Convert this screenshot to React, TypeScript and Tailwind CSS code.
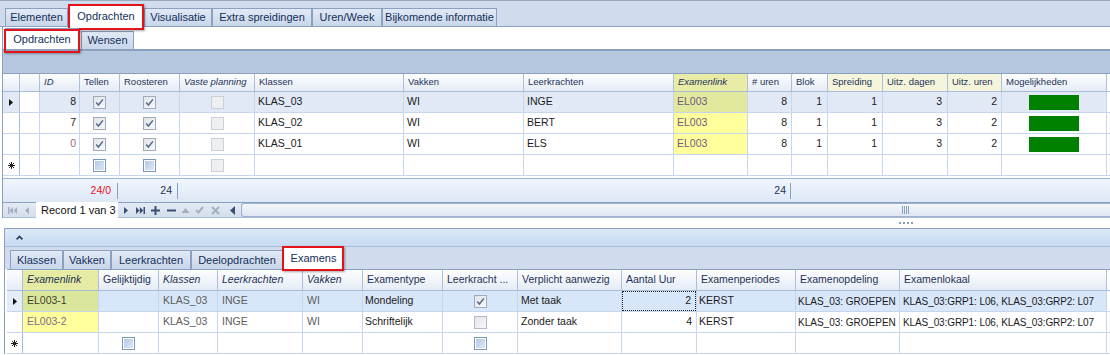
import React from 'react';

type Col = { w: string; label?: string; italic?: boolean; hdr?: string };

const topCols: Col[] = [
  { w: 'w-[17px]' },
  { w: 'w-[20px]' },
  { w: 'w-[40px]', label: 'ID', italic: true },
  { w: 'w-[40px]', label: 'Tellen' },
  { w: 'w-[60px]', label: 'Roosteren' },
  { w: 'w-[75px]', label: 'Vaste planning', italic: true },
  { w: 'w-[149px]', label: 'Klassen' },
  { w: 'w-[120px]', label: 'Vakken' },
  { w: 'w-[150px]', label: 'Leerkrachten' },
  { w: 'w-[74px]', label: 'Examenlink', italic: true, hdr: 'bg-[#e8eca6]' },
  { w: 'w-[44px]', label: '# uren' },
  { w: 'w-[36px]', label: 'Blok' },
  { w: 'w-[55px]', label: 'Spreiding', hdr: 'bg-[#f5f5dc]' },
  { w: 'w-[65px]', label: 'Uitz. dagen', hdr: 'bg-[#f5f5dc]' },
  { w: 'w-[54px]', label: 'Uitz. uren', hdr: 'bg-[#f5f5dc]' },
  { w: 'w-[105px]', label: 'Mogelijkheden' },
];

const botCols: Col[] = [
  { w: 'w-[16px]' },
  { w: 'w-[76px]', label: 'Examenlink', italic: true, hdr: 'bg-[#e6eba4]' },
  { w: 'w-[60px]', label: 'Gelijktijdig' },
  { w: 'w-[59px]', label: 'Klassen', italic: true },
  { w: 'w-[85px]', label: 'Leerkrachten', italic: true },
  { w: 'w-[60px]', label: 'Vakken', italic: true },
  { w: 'w-[80px]', label: 'Examentype' },
  { w: 'w-[75px]', label: 'Leerkracht ...' },
  { w: 'w-[104px]', label: 'Verplicht aanwezig' },
  { w: 'w-[75px]', label: 'Aantal Uur' },
  { w: 'w-[99px]', label: 'Examenperiodes' },
  { w: 'w-[104px]', label: 'Examenopdeling' },
  { w: 'w-[207px]', label: 'Examenlokaal' },
];

const topRows = [
  { id: '8', idCls: 'text-[#1b1b1b]', klas: 'KLAS_03', lk: 'INGE' },
  { id: '7', idCls: 'text-[#1b1b1b]', klas: 'KLAS_02', lk: 'BERT' },
  { id: '0', idCls: 'text-[#9a6a7a]', klas: 'KLAS_01', lk: 'ELS' },
];

const DARK = '#3a5070';
const GRAY = '#a3afbf';

function C({ w, cls = '', children }: { w: string; cls?: string; children?: React.ReactNode }) {
  return (
    <div className={`${w} flex h-full shrink-0 items-center overflow-hidden whitespace-nowrap border-r border-[#c6d6ec] ${cls}`}>
      {children}
    </div>
  );
}

function RedBox({ className }: { className: string }) {
  return (
    <div
      className={`pointer-events-none absolute z-20 border-2 border-[#e3121b] shadow-[1px_1px_2px_rgba(0,0,0,0.35)] ${className}`}
    />
  );
}

function Check({ kind }: { kind: 'on' | 'off' | 'dis' | 'new' }) {
  if (kind === 'new') {
    return (
      <div className="h-[13px] w-[13px] border border-[#7c96bb] bg-white p-px">
        <div className="h-full w-full bg-linear-to-br from-[#b5c9e6] to-[#dbe6f5]" />
      </div>
    );
  }
  const border = kind === 'on' ? 'border-[#a3acb9]' : kind === 'off' ? 'border-[#b4bbc6]' : 'border-[#cbd0d7]';
  const bg = kind === 'dis' ? 'bg-[#eeeff1]' : 'bg-linear-to-br from-[#e1e4e9] to-[#f7f8fa]';
  return (
    <div className={`flex h-[13px] w-[13px] items-center justify-center border ${border} ${bg}`}>
      {kind === 'on' && (
        <svg width="9" height="9" viewBox="0 0 9 9">
          <path d="M1.2 4.6 L3.4 7 L7.9 1.4" fill="none" stroke="#56698a" strokeWidth="1.5" />
        </svg>
      )}
    </div>
  );
}

function RowArrow() {
  return (
    <svg width="4" height="7" viewBox="0 0 4 7">
      <path d="M0 0 L4 3.5 L0 7Z" fill="#111" />
    </svg>
  );
}

function Star() {
  return (
    <svg width="7" height="7" viewBox="0 0 7 7">
      <path d="M3.5 0 V7 M0 3.5 H7 M1 1 L6 6 M6 1 L1 6" stroke="#222" strokeWidth="1" />
    </svg>
  );
}

function HeaderRow({ cols, h, text }: { cols: Col[]; h: string; text: string }) {
  return (
    <div className={`flex ${h} border-t border-b border-t-[#8ba0bf] border-b-[#a9bcd8]`}>
      {cols.map((c, i) => (
        <div
          key={i}
          className={`${c.w} flex h-full shrink-0 items-center overflow-hidden whitespace-nowrap border-r border-[#aebfd9] pl-[4px] ${text} text-[#1e3357] ${
            c.italic ? 'italic' : ''
          } ${c.hdr ? c.hdr : 'bg-linear-to-b from-[#fdfdfe] to-[#e5ecf6]'}`}
        >
          {c.label}
        </div>
      ))}
    </div>
  );
}

function TopRow({ r, sel }: { r: (typeof topRows)[number]; sel: boolean }) {
  const bg = sel ? 'bg-[#e0e9f5]' : 'bg-white';
  return (
    <div className="flex h-[21px] border-b border-[#c6d6ec] text-[10.5px]">
      <C w="w-[17px]" cls={`justify-center border-r-[#a9bcd8] ${bg}`}>{sel && <RowArrow />}</C>
      <C w="w-[20px]" cls="bg-white" />
      <C w="w-[40px]" cls={`justify-end pr-[3px] ${bg} ${r.idCls}`}>{r.id}</C>
      <C w="w-[40px]" cls={`justify-center ${bg}`}><Check kind="on" /></C>
      <C w="w-[60px]" cls={`justify-center ${bg}`}><Check kind="on" /></C>
      <C w="w-[75px]" cls={`justify-center ${bg}`}><Check kind="dis" /></C>
      <C w="w-[149px]" cls={`pl-[3px] ${bg}`}>{r.klas}</C>
      <C w="w-[120px]" cls={`pl-[3px] ${bg}`}>WI</C>
      <C w="w-[150px]" cls={`pl-[3px] ${bg}`}>{r.lk}</C>
      <C w="w-[74px]" cls={`pl-[3px] text-[#6f5a82] ${sel ? 'bg-[#e2e99c]' : 'bg-[#ffff9c]'}`}>EL003</C>
      <C w="w-[44px]" cls={`justify-end pr-[4px] ${bg}`}>8</C>
      <C w="w-[36px]" cls={`justify-end pr-[5px] ${bg}`}>1</C>
      <C w="w-[55px]" cls={`justify-end pr-[5px] ${bg}`}>1</C>
      <C w="w-[65px]" cls={`justify-end pr-[5px] ${bg}`}>3</C>
      <C w="w-[54px]" cls={`justify-end pr-[4px] ${bg}`}>2</C>
      <C w="w-[105px]" cls={`justify-center ${bg}`}>
        <div className="h-[15px] w-[50px] bg-[#008000]" />
      </C>
    </div>
  );
}

function NewTopRow() {
  return (
    <div className="flex h-[21px] border-b border-[#c6d6ec]">
      <C w="w-[17px]" cls="justify-center border-r-[#a9bcd8]"><Star /></C>
      <C w="w-[20px]" />
      <C w="w-[40px]" />
      <C w="w-[40px]" cls="justify-center"><Check kind="new" /></C>
      <C w="w-[60px]" cls="justify-center"><Check kind="new" /></C>
      <C w="w-[75px]" cls="justify-center"><Check kind="dis" /></C>
      <C w="w-[149px]" />
      <C w="w-[120px]" />
      <C w="w-[150px]" />
      <C w="w-[74px]" />
      <C w="w-[44px]" />
      <C w="w-[36px]" />
      <C w="w-[55px]" />
      <C w="w-[65px]" />
      <C w="w-[54px]" />
      <C w="w-[105px]" />
    </div>
  );
}

function BotRow({ sel, el, type, on, verplicht, uur }: { sel: boolean; el: string; type: string; on: boolean; verplicht: string; uur: string }) {
  const bg = sel ? 'bg-[#d7e6f9]' : 'bg-white';
  return (
    <div className="flex h-[21px] border-b border-[#c6d6ec] text-[10.5px]">
      <C w="w-[16px]" cls={`justify-center border-r-[#a9bcd8] ${sel ? 'bg-[#e4ecf7]' : 'bg-white'}`}>{sel && <RowArrow />}</C>
      <C w="w-[76px]" cls={`pl-[4px] ${sel ? 'bg-[#dbe69d] text-[#3e3e2a]' : 'bg-[#ffff9c] text-[#86688e]'}`}>{el}</C>
      <C w="w-[60px]" cls={bg} />
      <C w="w-[59px]" cls={`pl-[4px] text-[#5d5d5d] ${bg}`}>KLAS_03</C>
      <C w="w-[85px]" cls={`pl-[4px] text-[#5d5d5d] ${bg}`}>INGE</C>
      <C w="w-[60px]" cls={`pl-[4px] text-[#5d5d5d] ${bg}`}>WI</C>
      <C w="w-[80px]" cls={`pl-[2px] ${bg}`}>{type}</C>
      <C w="w-[75px]" cls={`justify-center ${bg}`}><Check kind={on ? 'on' : 'off'} /></C>
      <C w="w-[104px]" cls={`pl-[3px] ${bg}`}>{verplicht}</C>
      <C w="w-[75px]" cls={bg}>
        <div className={`flex h-full w-full items-center justify-end pr-[4px] ${sel ? 'border border-dotted border-[#222]' : ''}`}>{uur}</div>
      </C>
      <C w="w-[99px]" cls={`pl-[2px] ${bg}`}>KERST</C>
      <C w="w-[104px]" cls={`pl-[2px] text-[10px] ${bg}`}>KLAS_03: GROEPEN</C>
      <C w="w-[207px]" cls={`pl-[3px] text-[10px] tracking-[-0.1px] ${bg}`}>KLAS_03:GRP1: L06, KLAS_03:GRP2: L07</C>
    </div>
  );
}

function NewBotRow() {
  return (
    <div className="flex h-[21px] border-b border-[#c6d6ec]">
      <C w="w-[16px]" cls="justify-center border-r-[#a9bcd8]"><Star /></C>
      <C w="w-[76px]" />
      <C w="w-[60px]" cls="justify-center"><Check kind="new" /></C>
      <C w="w-[59px]" />
      <C w="w-[85px]" />
      <C w="w-[60px]" />
      <C w="w-[80px]" />
      <C w="w-[75px]" cls="justify-center"><Check kind="new" /></C>
      <C w="w-[104px]" />
      <C w="w-[75px]" />
      <C w="w-[99px]" />
      <C w="w-[104px]" />
      <C w="w-[207px]" />
    </div>
  );
}

const tabBase =
  'flex items-center justify-center border border-b-0 border-[#8ca0bf] text-[11px] leading-none text-[#15305a] whitespace-nowrap';
const tabOff = `${tabBase} h-[18px] bg-linear-to-b from-[#e1e9f5] to-[#c8d6ea]`;

export default function App() {
  return (
    <div className="h-[355px] w-[1110px] overflow-hidden bg-white font-['Liberation_Sans',Arial,sans-serif] text-[#1b1b1b] select-none">
      {/* main tabs */}
      <div className="flex h-[27px] items-end border-t border-b border-t-[#98a8be] border-b-[#8ba0bf] bg-[#d0dcee] pl-[5px]">
        <div className={`${tabOff} w-[63px]`}>Elementen</div>
        <div className={`${tabBase} relative z-10 -mb-px h-[23px] w-[76px] bg-white`}>
          Opdrachten
          <RedBox className="-left-px -right-px -top-px -bottom-[3px]" />
        </div>
        <div className={`${tabOff} w-[68px]`}>Visualisatie</div>
        <div className={`${tabOff} w-[100px]`}>Extra spreidingen</div>
        <div className={`${tabOff} w-[70px]`}>Uren/Week</div>
        <div className={`${tabOff} w-[115px]`}>Bijkomende informatie</div>
      </div>

      {/* top panel */}
      <div className="ml-[2px] flex flex-col border-l border-[#8ba0bf]">
        <div className="flex h-[22px] items-end bg-white pl-[2px]">
          <div className={`${tabBase} relative z-10 h-[21px] w-[74px] bg-white`}>
            Opdrachten
            <RedBox className="-left-[2px] -right-[2px] top-0 -bottom-[4px]" />
          </div>
          <div className={`${tabOff} ml-[2px] w-[53px]`}>Wensen</div>
        </div>
        <div className="h-[2px] bg-[#8ba0bf]" />
        <div className="h-[22px] bg-[#b6c8e0]" />

        <HeaderRow cols={topCols} h="h-[19px]" text="text-[9.5px]" />
        {topRows.map((r, i) => (
          <TopRow key={r.id} r={r} sel={i === 0} />
        ))}
        <NewTopRow />
        <div className="h-[2px] bg-white" />

        {/* footer summaries */}
        <div className="flex h-[24px] items-center border-t border-[#9fb3d1] bg-linear-to-b from-[#f1f6fd] to-[#dde8f6] text-[10.5px]">
          <div className="w-[77px] shrink-0" />
          <div className="w-[40px] shrink-0">
            <div className="mr-[2px] flex h-[16px] items-center justify-end border-r border-[#8ba0bf] pr-[6px] text-[#f0101e]">24/0</div>
          </div>
          <div className="w-[60px] shrink-0">
            <div className="mr-[2px] flex h-[16px] items-center justify-end border-r border-[#8ba0bf] pr-[5px] text-[#1e3357]">24</div>
          </div>
          <div className="w-[568px] shrink-0" />
          <div className="w-[44px] shrink-0">
            <div className="mr-[1px] flex h-[16px] items-center justify-end border-r border-[#8ba0bf] pr-[4px] text-[#1e3357]">24</div>
          </div>
        </div>

        {/* navigator */}
        <div className="flex h-[16px] items-center border-t border-b border-t-[#8ba0bf] border-b-[#a9bcd8] bg-linear-to-b from-[#e4ebf5] to-[#d3deec]">
          <svg className="ml-[5px]" width="9" height="7" viewBox="0 0 9 7">
            <rect x="0" y="0" width="1.5" height="7" fill={GRAY} />
            <path d="M5 0 L1.5 3.5 L5 7Z M9 0 L5.5 3.5 L9 7Z" fill={GRAY} />
          </svg>
          <svg className="ml-[8px]" width="4" height="7" viewBox="0 0 4 7">
            <path d="M4 0 L0 3.5 L4 7Z" fill={GRAY} />
          </svg>
          <div className="ml-[7px] flex h-[16px] w-[82px] items-center bg-white pl-[5px] text-[11px] text-[#111]">Record 1 van 3</div>
          <svg className="ml-[6px]" width="4" height="7" viewBox="0 0 4 7">
            <path d="M0 0 L4 3.5 L0 7Z" fill={DARK} />
          </svg>
          <svg className="ml-[8px]" width="9" height="7" viewBox="0 0 9 7">
            <path d="M0 0 L3.5 3.5 L0 7Z M3.8 0 L7.3 3.5 L3.8 7Z" fill={DARK} />
            <rect x="7.5" y="0" width="1.5" height="7" fill={DARK} />
          </svg>
          <svg className="ml-[6px]" width="9" height="9" viewBox="0 0 9 9">
            <rect x="3.5" y="0" width="2" height="9" fill={DARK} />
            <rect x="0" y="3.5" width="9" height="2" fill={DARK} />
          </svg>
          <svg className="ml-[7px]" width="9" height="9" viewBox="0 0 9 9">
            <rect x="0" y="3.5" width="9" height="2" fill={DARK} />
          </svg>
          <svg className="ml-[5px]" width="9" height="5" viewBox="0 0 9 5">
            <path d="M4.5 0 L8.5 5 L0.5 5Z" fill={GRAY} />
          </svg>
          <svg className="ml-[5px]" width="9" height="8" viewBox="0 0 9 8">
            <path d="M1 4 L3.5 6.5 L8 1" fill="none" stroke={GRAY} strokeWidth="2" />
          </svg>
          <svg className="ml-[7px]" width="9" height="9" viewBox="0 0 9 9">
            <path d="M1 1 L8 8 M8 1 L1 8" stroke={GRAY} strokeWidth="2" />
          </svg>
          <svg className="ml-[10px]" width="5" height="9" viewBox="0 0 5 9">
            <path d="M5 0 L0 4.5 L5 9Z" fill={DARK} />
          </svg>
          <div className="ml-[6px] flex h-[14px] flex-1 items-center rounded-l-[3px] border border-r-0 border-[#9fb2cf] bg-linear-to-b from-[#f3f6fb] to-[#dfe7f2] pl-[660px]">
            <svg width="8" height="8" viewBox="0 0 8 8">
              <path d="M0.5 0 V8 M2.5 0 V8 M4.5 0 V8 M6.5 0 V8" stroke="#8a9fbf" strokeWidth="1" />
            </svg>
          </div>
        </div>
      </div>

      {/* splitter */}
      <div className="flex h-[10px] items-center bg-white pl-[899px]">
        <svg width="14" height="2" viewBox="0 0 14 2">
          <rect x="0" y="0" width="2" height="2" fill="#8a9fbf" />
          <rect x="4" y="0" width="2" height="2" fill="#8a9fbf" />
          <rect x="8" y="0" width="2" height="2" fill="#8a9fbf" />
          <rect x="12" y="0" width="2" height="2" fill="#8a9fbf" />
        </svg>
      </div>

      {/* bottom panel */}
      <div className="ml-[4px] flex flex-col border-t border-l border-[#8ba0bf]">
        <div className="flex h-[18px] items-center border-b border-[#a9bcd8] bg-linear-to-b from-[#dde9f8] to-[#c7daf2] pl-[11px]">
          <svg width="7" height="5" viewBox="0 0 7 5">
            <path d="M0.6 4.4 L3.5 1.4 L6.4 4.4" fill="none" stroke="#27395a" strokeWidth="1.6" />
          </svg>
        </div>
        <div className="flex h-[22px] items-end bg-[#d0dcee] pl-[5px]">
          <div className={`${tabOff} h-[19px] w-[53px]`}>Klassen</div>
          <div className={`${tabOff} h-[19px] w-[48px]`}>Vakken</div>
          <div className={`${tabOff} h-[19px] w-[80px]`}>Leerkrachten</div>
          <div className={`${tabOff} h-[19px] w-[92px]`}>Deelopdrachten</div>
          <div className={`${tabBase} relative z-10 h-[22px] w-[61px] bg-white`}>
            Examens
            <RedBox className="-left-[2px] -right-[1px] -top-[2px] -bottom-[2px]" />
          </div>
        </div>
        <div className="ml-[2px] flex flex-col">
          <HeaderRow cols={botCols} h="h-[22px]" text="text-[10.5px]" />
          <BotRow sel el="EL003-1" type="Mondeling" on verplicht="Met taak" uur="2" />
          <BotRow sel={false} el="EL003-2" type="Schriftelijk" on={false} verplicht="Zonder taak" uur="4" />
          <NewBotRow />
        </div>
      </div>
    </div>
  );
}
